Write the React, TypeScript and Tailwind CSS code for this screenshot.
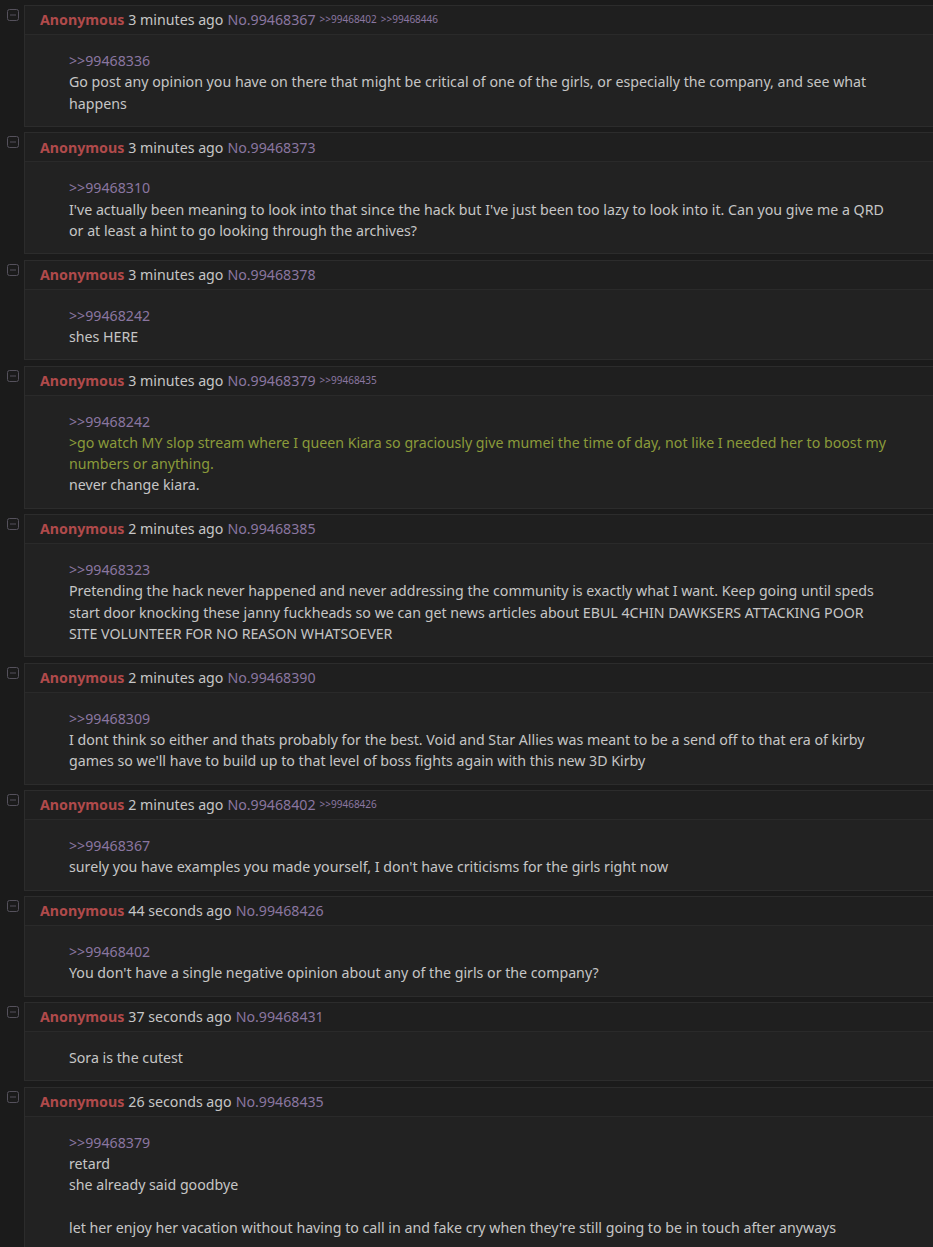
import React from 'react';

type Line = { t: string; kind?: 'quote' | 'green' | 'blank' };

type Post = {
  no: string;
  ago: string;
  backlinks?: string[];
  lines: Line[];
};

const posts: Post[] = [
  {
    no: '99468367',
    ago: '3 minutes ago',
    backlinks: ['99468402', '99468446'],
    lines: [
      { t: '>>99468336', kind: 'quote' },
      { t: 'Go post any opinion you have on there that might be critical of one of the girls, or especially the company, and see what happens' },
    ],
  },
  {
    no: '99468373',
    ago: '3 minutes ago',
    lines: [
      { t: '>>99468310', kind: 'quote' },
      { t: "I've actually been meaning to look into that since the hack but I've just been too lazy to look into it. Can you give me a QRD or at least a hint to go looking through the archives?" },
    ],
  },
  {
    no: '99468378',
    ago: '3 minutes ago',
    lines: [
      { t: '>>99468242', kind: 'quote' },
      { t: 'shes HERE' },
    ],
  },
  {
    no: '99468379',
    ago: '3 minutes ago',
    backlinks: ['99468435'],
    lines: [
      { t: '>>99468242', kind: 'quote' },
      { t: '>go watch MY slop stream where I queen Kiara so graciously give mumei the time of day, not like I needed her to boost my numbers or anything.', kind: 'green' },
      { t: 'never change kiara.' },
    ],
  },
  {
    no: '99468385',
    ago: '2 minutes ago',
    lines: [
      { t: '>>99468323', kind: 'quote' },
      { t: 'Pretending the hack never happened and never addressing the community is exactly what I want. Keep going until speds start door knocking these janny fuckheads so we can get news articles about EBUL 4CHIN DAWKSERS ATTACKING POOR SITE VOLUNTEER FOR NO REASON WHATSOEVER' },
    ],
  },
  {
    no: '99468390',
    ago: '2 minutes ago',
    lines: [
      { t: '>>99468309', kind: 'quote' },
      { t: "I dont think so either and thats probably for the best. Void and Star Allies was meant to be a send off to that era of kirby games so we'll have to build up to that level of boss fights again with this new 3D Kirby" },
    ],
  },
  {
    no: '99468402',
    ago: '2 minutes ago',
    backlinks: ['99468426'],
    lines: [
      { t: '>>99468367', kind: 'quote' },
      { t: "surely you have examples you made yourself, I don't have criticisms for the girls right now" },
    ],
  },
  {
    no: '99468426',
    ago: '44 seconds ago',
    lines: [
      { t: '>>99468402', kind: 'quote' },
      { t: "You don't have a single negative opinion about any of the girls or the company?" },
    ],
  },
  {
    no: '99468431',
    ago: '37 seconds ago',
    lines: [{ t: 'Sora is the cutest' }],
  },
  {
    no: '99468435',
    ago: '26 seconds ago',
    lines: [
      { t: '>>99468379', kind: 'quote' },
      { t: 'retard' },
      { t: 'she already said goodbye' },
      { t: '', kind: 'blank' },
      { t: "let her enjoy her vacation without having to call in and fake cry when they're still going to be in touch after anyways" },
    ],
  },
];

const MinusBox = () => (
  <svg width="12" height="12" viewBox="0 0 12 12" className="block">
    <rect x="0.5" y="0.5" width="11" height="11" rx="2" fill="none" stroke="#55515c" />
    <line x1="3" y1="6" x2="9" y2="6" stroke="#55515c" />
  </svg>
);

const PostRow = ({ p }: { p: Post }) => (
  <div className="flex">
    <div className="w-[24px] shrink-0 pl-[7px] pt-[4px]">
      <MinusBox />
    </div>
    <div className="flex-1 border border-[#2c2c2c] border-r-0 bg-[#222222]">
      <div className="h-[29px] flex items-center pl-[15px] bg-[#1f1f1f] border-b border-[#2a2a2a] whitespace-nowrap">
        <span className="font-bold text-[#b04a4b]">Anonymous</span>
        <span className="ml-[4px] text-[#c6c6c6]">{p.ago}</span>
        <span className="ml-[4px] text-[#8a76a0]">No.{p.no}</span>
        {p.backlinks?.map((b) => (
          <span key={b} className="ml-[4px] text-[10px] text-[#8a76a0]">
            &gt;&gt;{b}
          </span>
        ))}
      </div>
      <div className="pl-[44px] pr-[40px] pt-[15px] pb-[12px]">
        {p.lines.map((l, i) =>
          l.kind === 'blank' ? (
            <div key={i} className="h-[21.3px]" />
          ) : (
            <div
              key={i}
              className={
                l.kind === 'quote'
                  ? 'text-[#8a76a0]'
                  : l.kind === 'green'
                  ? 'text-[#8b9b3a]'
                  : 'text-[#c6c6c6]'
              }
            >
              {l.t}
            </div>
          )
        )}
      </div>
    </div>
  </div>
);

export default function App() {
  return (
    <div
      className="min-h-screen bg-[#1b1b1b] pt-[5px] flex flex-col gap-[5.4px] text-[14.2px] leading-[21.3px] overflow-hidden"
      style={{ fontFamily: '"Noto Sans", "Open Sans", sans-serif' }}
    >
      {posts.map((p) => (
        <PostRow key={p.no} p={p} />
      ))}
    </div>
  );
}
